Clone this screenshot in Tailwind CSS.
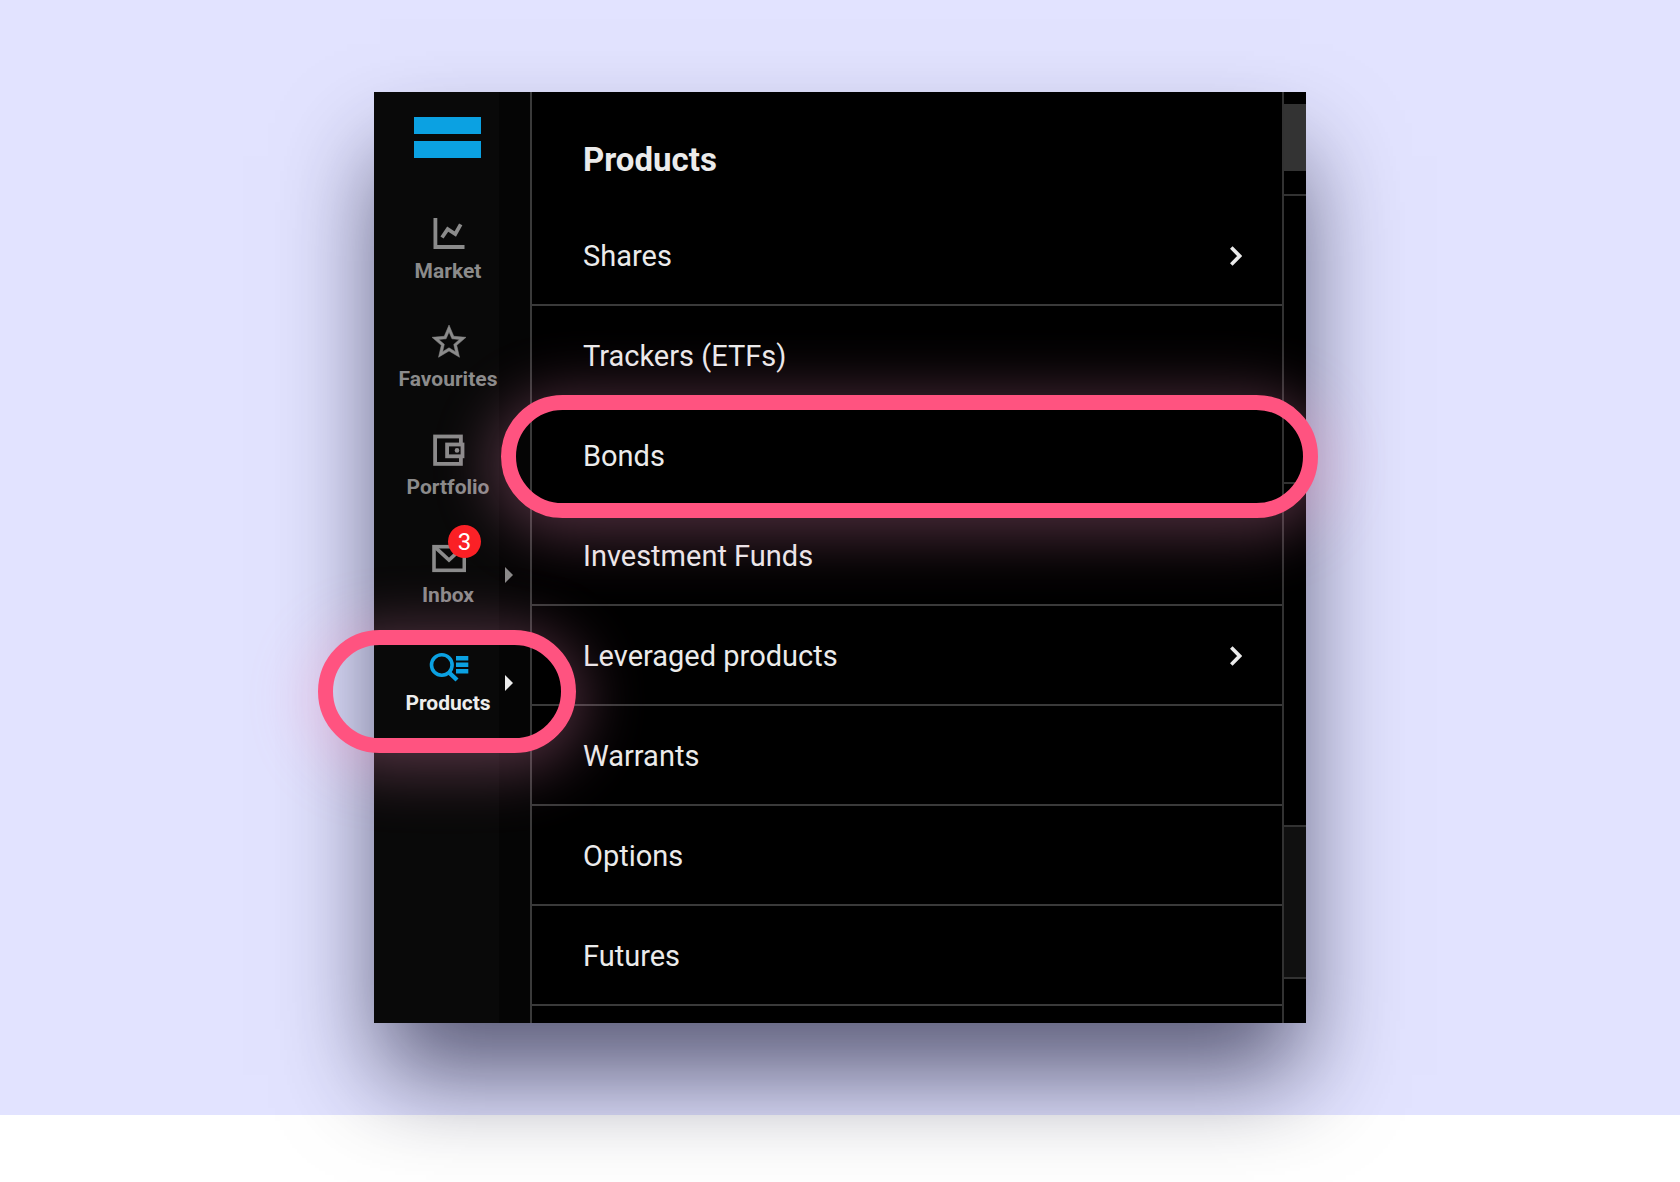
<!DOCTYPE html>
<html lang="en">
<head>
  <meta charset="UTF-8">
  <meta name="viewport" content="width=device-width, initial-scale=1.0">
  <title>Products - Bonds</title>
  <script src="https://cdn.jsdelivr.net/npm/@tailwindcss/browser@4"></script>
</head>
<body class="min-h-screen bg-white font-[Roboto,sans-serif]">

  <section class="bg-[#e2e3ff] py-[92px]">
    <div class="relative mx-auto flex h-[931px] w-full max-w-[932px] bg-black shadow-[0_58px_92px_-6px_rgba(6,6,36,0.62)]">

      <!-- Sidebar -->
      <aside class="w-[158px] shrink-0 border-r-2 border-[#3a3a3a] bg-linear-to-r from-[#090909] from-80% to-[#050505] to-80% pt-[25px]">
        <a href="#" aria-label="Home" class="mx-10 flex w-[67px] flex-col gap-[7px]">
          <span class="h-[17px] bg-[#0ba1e2]"></span>
          <span class="h-[17px] bg-[#0ba1e2]"></span>
        </a>

        <nav class="mt-[58px] flex w-[148px] flex-col gap-[41px] text-[21px]/6 font-bold text-[#8b8b8b]">
          <a href="#" class="flex flex-col items-center gap-[7px]">
            <svg class="size-9" viewBox="0 0 36 36" fill="none" stroke="currentColor" stroke-width="3.8">
              <path d="M5.4 2V31H34.5" />
              <path d="M12 21.5L17.7 13.2L25.3 18L30.7 8.3" />
            </svg>
            Market
          </a>
          <a href="#" class="flex flex-col items-center gap-[7px]">
            <svg class="size-9" viewBox="0.8 1.4 21.2 21.2" fill="currentColor" stroke="currentColor" stroke-width="0.3">
              <path d="M22 9.24l-7.19-.62L12 2 9.19 8.63 2 9.24l5.46 4.73L5.82 21 12 17.27 18.18 21l-1.63-7.03L22 9.24zM12 15.4l-3.76 2.27 1-4.28-3.32-2.88 4.38-.38L12 6.1l1.71 4.04 4.38.38-3.32 2.88 1 4.28L12 15.4z" />
            </svg>
            Favourites
          </a>
          <a href="#" class="flex flex-col items-center gap-[7px]">
            <svg class="size-9" viewBox="0 0 36 36" fill="none" stroke="currentColor" stroke-width="3.8">
              <rect x="5.1" y="4.5" width="25.8" height="27.4" />
              <rect x="17.1" y="12.5" width="15.4" height="11.8" fill="#0a0a0a" />
              <circle cx="27" cy="18.4" r="2.3" fill="currentColor" stroke="none" />
            </svg>
            Portfolio
          </a>
          <a href="#" class="relative flex flex-col items-center gap-[7px]">
            <svg class="size-9" viewBox="0 0 36 36" fill="none" stroke="currentColor" stroke-width="3.6">
              <rect x="4" y="6.7" width="30.3" height="23.6" />
              <path d="M4.5 6.7L19 20L33.5 6.7" />
            </svg>
            Inbox
            <span class="absolute -top-[15px] left-[74px] flex size-[33px] items-center justify-center rounded-full bg-[#fb2025] text-2xl font-normal text-white">3</span>
            <svg class="absolute top-[27px] right-[9px] h-4 w-2" viewBox="0 0 8 16" fill="currentColor"><path d="M0 0L8 8L0 16Z" /></svg>
          </a>
          <a href="#" aria-current="page" class="relative flex flex-col items-center gap-[7px] text-[#ededed]">
            <svg class="size-9 overflow-visible text-[#0ba1e2]" viewBox="0 0 36 36" fill="none" stroke="currentColor">
              <circle cx="11.8" cy="17" r="10.3" stroke-width="3.6" />
              <path d="M18.5 24L27 32" stroke-width="4.4" />
              <path d="M26 10.2H38.3M26 16.7H38.3M26 23.2H38.3" stroke-width="4.6" />
            </svg>
            Products
            <svg class="absolute top-[27px] right-[9px] h-4 w-2" viewBox="0 0 8 16" fill="currentColor"><path d="M0 0L8 8L0 16Z" /></svg>
          </a>
        </nav>
      </aside>

      <!-- Products menu -->
      <main class="flex grow flex-col overflow-hidden border-r-2 border-[#323232] text-[#ebebeb]">
        <h1 class="flex h-[114px] shrink-0 items-center px-[51px] pt-[22px] text-[33px]/10 font-bold">Products</h1>
        <ul class="text-[29px]/9">
          <li><a href="#" class="flex h-[100px] items-center justify-between border-b-2 border-[#3a3a3a] pt-0.5 pr-10 pl-[51px]">
            Shares
            <svg class="h-5 w-3" viewBox="0 0 12 20" fill="none" stroke="currentColor" stroke-width="3.6"><path d="M1.3 1.6L9.6 10L1.3 18.4" /></svg>
          </a></li>
          <li><a href="#" class="flex h-[100px] items-center border-b-2 border-[#3a3a3a] px-[51px] pt-0.5">Trackers (ETFs)</a></li>
          <li><a href="#" class="flex h-[100px] items-center border-b-2 border-[#3a3a3a] px-[51px] pt-0.5">Bonds</a></li>
          <li><a href="#" class="flex h-[100px] items-center border-b-2 border-[#3a3a3a] px-[51px] pt-0.5">Investment Funds</a></li>
          <li><a href="#" class="flex h-[100px] items-center justify-between border-b-2 border-[#3a3a3a] pt-0.5 pr-10 pl-[51px]">
            Leveraged products
            <svg class="h-5 w-3" viewBox="0 0 12 20" fill="none" stroke="currentColor" stroke-width="3.6"><path d="M1.3 1.6L9.6 10L1.3 18.4" /></svg>
          </a></li>
          <li><a href="#" class="flex h-[100px] items-center border-b-2 border-[#3a3a3a] px-[51px] pt-0.5">Warrants</a></li>
          <li><a href="#" class="flex h-[100px] items-center border-b-2 border-[#3a3a3a] px-[51px] pt-0.5">Options</a></li>
          <li><a href="#" class="flex h-[100px] items-center border-b-2 border-[#3a3a3a] px-[51px] pt-0.5">Futures</a></li>
        </ul>
      </main>

      <!-- Edge of the page behind the menu -->
      <div class="flex w-[22px] shrink-0 flex-col pt-3">
        <div class="h-[67px] bg-[#333333]"></div>
        <div class="h-[25px] border-b-2 border-[#323232]"></div>
        <div class="h-72 border-b-2 border-[#323232]"></div>
        <div class="h-[343px] border-b-2 border-[#323232]"></div>
        <div class="h-[152px] border-b-2 border-[#323232] bg-[#101010]"></div>
      </div>

      <!-- Highlights -->
      <div class="pointer-events-none absolute top-[303px] -right-3 left-[127px] h-[123px] rounded-full border-[15px] border-[#ff5380] shadow-[0_8px_60px_10px_rgba(255,150,200,0.3)]"></div>
      <div class="pointer-events-none absolute top-[538px] -left-14 h-[123px] w-[258px] rounded-full border-[15px] border-[#ff5380] shadow-[0_8px_60px_10px_rgba(255,150,200,0.3)]"></div>
    </div>
  </section>

</body>
</html>
